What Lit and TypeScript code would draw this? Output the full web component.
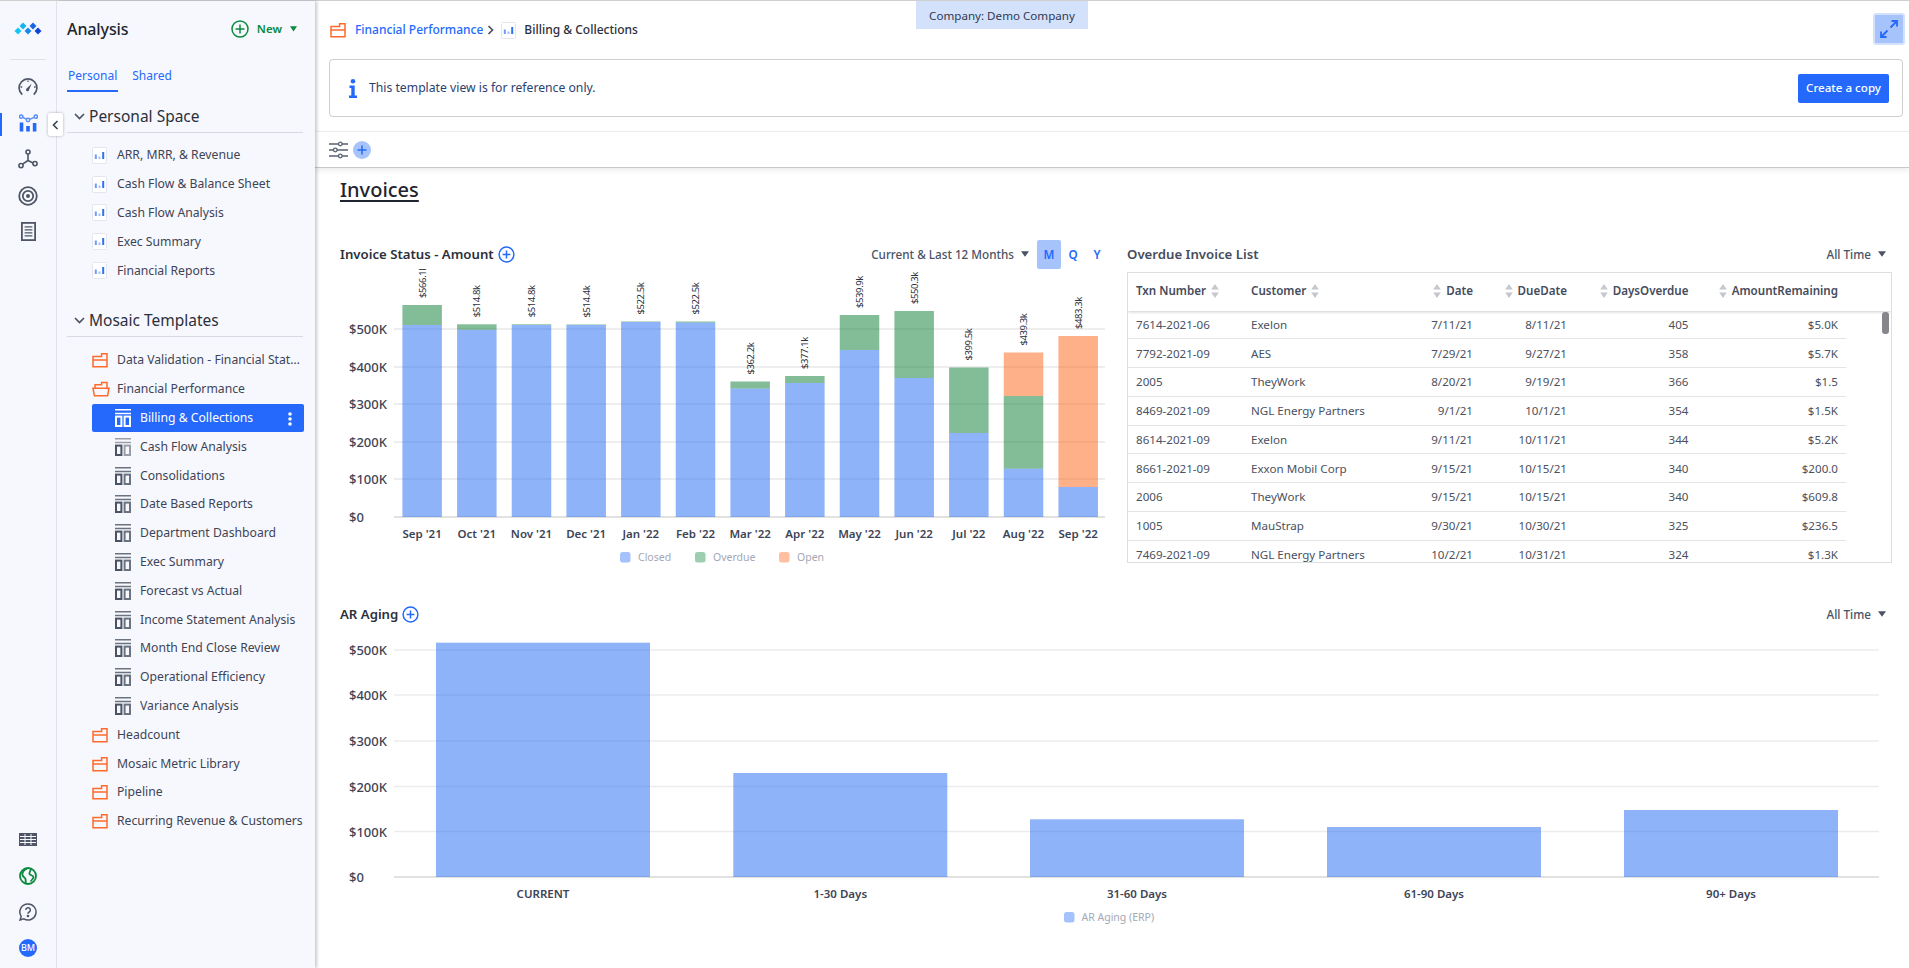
import { LitElement, html, css, svg } from "lit";
import { customElement } from "lit/decorators.js";

const personal = ["ARR, MRR, & Revenue", "Cash Flow & Balance Sheet", "Cash Flow Analysis", "Exec Summary", "Financial Reports"];
const reportsSub = ["Cash Flow Analysis", "Consolidations", "Date Based Reports", "Department Dashboard", "Exec Summary", "Forecast vs Actual", "Income Statement Analysis", "Month End Close Review", "Operational Efficiency", "Variance Analysis"];
const foldersAfter = ["Headcount", "Mosaic Metric Library", "Pipeline", "Recurring Revenue & Customers"];

const rows = [
  ["7614-2021-06", "Exelon", "7/11/21", "8/11/21", "405", "$5.0K"],
  ["7792-2021-09", "AES", "7/29/21", "9/27/21", "358", "$5.7K"],
  ["2005", "TheyWork", "8/20/21", "9/19/21", "366", "$1.5"],
  ["8469-2021-09", "NGL Energy Partners", "9/1/21", "10/1/21", "354", "$1.5K"],
  ["8614-2021-09", "Exelon", "9/11/21", "10/11/21", "344", "$5.2K"],
  ["8661-2021-09", "Exxon Mobil Corp", "9/15/21", "10/15/21", "340", "$200.0"],
  ["2006", "TheyWork", "9/15/21", "10/15/21", "340", "$609.8"],
  ["1005", "MauStrap", "9/30/21", "10/30/21", "325", "$236.5"],
  ["7469-2021-09", "NGL Energy Partners", "10/2/21", "10/31/21", "324", "$1.3K"],
];

const months = [
  { m: "Sep '21", t: "$566.1l", top: 305, closed: 325, over: 305 },
  { m: "Oct '21", t: "$514.8k", top: 324.3, closed: 329.7, over: 324.3 },
  { m: "Nov '21", t: "$514.8k", top: 324.3, closed: 325, over: 324.3 },
  { m: "Dec '21", t: "$514.4k", top: 324.5, closed: 325, over: 324.5 },
  { m: "Jan '22", t: "$522.5k", top: 321.5, closed: 322, over: 321.5 },
  { m: "Feb '22", t: "$522.5k", top: 321.5, closed: 322.5, over: 321.5 },
  { m: "Mar '22", t: "$362.2k", top: 381.5, closed: 388.5, over: 381.5 },
  { m: "Apr '22", t: "$377.1k", top: 376, closed: 383, over: 376 },
  { m: "May '22", t: "$539.9k", top: 315, closed: 350, over: 315 },
  { m: "Jun '22", t: "$550.3k", top: 311, closed: 378, over: 311 },
  { m: "Jul '22", t: "$399.5k", top: 367.5, closed: 433, over: 367.5 },
  { m: "Aug '22", t: "$439.3k", top: 352.5, closed: 468.7, over: 396 },
  { m: "Sep '22", t: "$483.3k", top: 336, closed: 487, over: 487 },
];
const aging = [
  { l: "CURRENT", x: 436, top: 642.7 },
  { l: "1-30 Days", x: 733.3, top: 773 },
  { l: "31-60 Days", x: 1030, top: 819.3 },
  { l: "61-90 Days", x: 1327, top: 827 },
  { l: "90+ Days", x: 1624, top: 810 },
];

const plusOutline = html`<svg class="plus" width="17" height="17" viewBox="0 0 17 17"><circle cx="8.5" cy="8.5" r="7.4" fill="none" stroke="#2469fb" stroke-width="1.5"/><path d="M8.5 4.6v7.8M4.6 8.5h7.8" stroke="#2469fb" stroke-width="1.5"/></svg>`;
const caret = html`<svg class="caret" width="8" height="6" viewBox="0 0 8 6"><path d="M0 .3h8L4 5.800z" fill="#4a5264"/></svg>`;
const sort = html`<svg class="sort" width="8" height="14" viewBox="0 0 8 14"><path d="M4 0l3.800 5.400H.2zM.2 8.600h7.600L4 14z" fill="#c5c8ce"/></svg>`;

const folder = html`<svg class="ico" width="16" height="16" viewBox="0 0 16 16"><path d="M1 14.700V4.400h8.600V1.800h5.400v12.900zM1 8h14" fill="none" stroke="#fd6a2a" stroke-width="1.500"/></svg>`;
const folderOpen = html`<svg class="ico" width="18" height="16" viewBox="0 0 18 16"><path d="M3 7V3.700h6.600V1.400h5.400V7M1 7.200h16l-1.400 7.600H2.400z" fill="none" stroke="#fd6a2a" stroke-width="1.500"/></svg>`;
const chartDoc = html`<svg class="ico" width="15" height="17" viewBox="0 0 15 17"><rect x=".5" y=".5" width="14" height="16" rx="1" fill="#fff" stroke="#e3e6ee"/><path d="M2.800 7.500h2v4.500h-2z" fill="#6f9cf6"/><path d="M6.500 9.500h2V12h-2z" fill="#a3c0f9"/><path d="M10.200 5h2v7h-2z" fill="#2f70f5"/></svg>`;
const layoutIcon = (c: string, c2: string) => html`<svg class="ico" width="16" height="18" viewBox="0 0 16 18"><path d="M0 .8h16M0 4.600h16" stroke="${c2}" stroke-width="1.500"/><rect x="1" y="7.600" width="5.400" height="9.400" fill="none" stroke="${c}" stroke-width="2"/><rect x="9.600" y="7.600" width="5.400" height="9.400" fill="none" stroke="${c2}" stroke-width="2"/></svg>`;

const railTop = [
  html`<svg width="20" height="18" viewBox="0 0 20 18" fill="none" stroke="#4d5566" stroke-width="1.700"><path d="M4.200 16.600A8.900 8.900 0 1 1 15.800 16.600"/><path d="M8.600 10.600l5-4.800-2.600 6.200a1.500 1.500 0 1 1-2.400-1.400z" fill="#4d5566" stroke="none"/><path d="M10 2.500v1.600M2.600 9h1.600M16 9h1.600" stroke-width="1.300"/></svg>`,
  html`<svg width="19" height="18" viewBox="0 0 19 18"><g fill="none" stroke="#5b8ff8" stroke-width="1.500"><circle cx="2.200" cy="2.600" r="1.700"/><circle cx="9" cy="6" r="1.700"/><circle cx="16.800" cy="2.600" r="1.700"/><path d="M3.800 3.400l3.600 1.800M10.600 5.400l4.600-2"/></g><path d="M.7 8.500h3.600v9H.7zM7.200 12h3.600v5.500H7.200zM13.800 9h3.600v8.500h-3.600z" fill="#2469fb"/></svg>`,
  html`<svg width="20" height="20" viewBox="0 0 20 20" fill="none" stroke="#4d5566" stroke-width="1.600"><circle cx="10" cy="3" r="2"/><circle cx="3" cy="16.600" r="2.100"/><circle cx="17" cy="14.600" r="2.100"/><path d="M10 5v6.500L4.600 15.200M10 11.500l5.100 2.500"/></svg>`,
  html`<svg width="20" height="20" viewBox="0 0 20 20" fill="none" stroke="#4d5566"><circle cx="10" cy="10" r="8.800" stroke-width="1.800"/><circle cx="10" cy="10" r="5.200" stroke-width="1.800"/><circle cx="10" cy="10" r="2" fill="#4d5566" stroke="none"/></svg>`,
  html`<svg width="15" height="19" viewBox="0 0 15 19" fill="none" stroke="#4d5566"><rect x=".9" y=".9" width="13.200" height="17.200" stroke-width="1.800"/><path d="M3.600 4.800h7.800M3.600 7.800h7.800M3.600 10.800h7.800M3.600 13.800h7.800" stroke-width="1.300"/></svg>`,
];

@customElement("app-root")
export class AppRoot extends LitElement {
  static styles = css`
    :host {
      display: block;
      width: 1909px;
      height: 968px;
      overflow: hidden;
      position: relative;
      font-family: "Noto Sans", "Open Sans", sans-serif;
      font-size: 12.2px;
      color: #3d4456;
      background: #fff;
    }
    * { box-sizing: border-box; }
    .shell { display: flex; height: 968px; border-top: 1px solid #cfcfcf; }
    .rail {
      width: 57px; flex: none; background: #f7f8fd; border-right: 1px solid #e3e5ec;
      display: flex; flex-direction: column; align-items: center; position: relative;
    }
    .logo { height: 58px; display: flex; align-items: center; justify-content: center; }
    .rail-sep { width: 36px; height: 1px; background: #e0e2e8; }
    .rail-items { display: flex; flex-direction: column; margin-top: 9px; }
    .rail-btn { width: 36px; height: 36.2px; display: flex; align-items: center; justify-content: center; }
    .rail-bottom { margin-top: auto; margin-bottom: 2px; display: flex; flex-direction: column; }
    .marker { position: absolute; left: 0; top: 112px; width: 2px; height: 23px; background: #2469fb; }
    .avatar {
      width: 18px; height: 18px; border-radius: 50%; background: #2469fb; color: #fff;
      font-size: 9px; font-weight: 500; display: flex; align-items: center; justify-content: center;
    }
    .collapse {
      position: absolute; left: 48px; top: 112px; width: 15px; height: 23px; background: #fff;
      border-radius: 2px; box-shadow: 0 0 3px rgba(0,0,0,.3); display: flex; align-items: center; justify-content: center; z-index: 3;
    }
    .side {
      width: 258px; flex: none; background: #f7f8fd; padding: 0 11px 0 10px;
      box-shadow: 2px 0 3px rgba(60,70,90,.28); position: relative; z-index: 2;
    }
    .side-title { height: 57px; padding-bottom: 2px; display: flex; align-items: center; justify-content: space-between; padding-right: 7px; }
    .side-title h1 { margin: 0; font-size: 16px; font-weight: 500; color: #22262f; letter-spacing: -.1px; }
    .new { display: flex; align-items: center; color: #0a8a3c; font-size: 11.5px; font-weight: 600; }
    .new svg:first-child { margin-right: 8px; }
    .new svg:last-child { margin-left: 8px; }
    .tabs { display: flex; gap: 13px; margin-top: 3px; height: 31px; }
    .tab { color: #2469fb; font-size: 12px; padding: 6px 1px 0; height: 31px; }
    .tab.on { border-bottom: 2px solid #2469fb; }
    .sec {
      height: 41px; display: flex; align-items: flex-end; padding: 0 0 5px 7px; border-bottom: 1px solid #d8dae3;
      font-size: 15.5px; line-height: 22px; color: #2b303c; margin-right: 1px;
    }
    .sec svg { margin: 0 4px 7px 0; }
    .sec.two { margin-top: 11px; }
    .list { display: flex; flex-direction: column; margin-top: 8px; }
    .list.two { margin-top: 9px; }
    .row { height: 28.8px; display: flex; align-items: center; padding-left: 25px; white-space: nowrap; color: #3d4456; position: relative; font-size: 12.2px; }
    .row .ic { width: 25px; flex: none; display: flex; align-items: center; }
    .row .lb { overflow: hidden; text-overflow: ellipsis; flex: 1; min-width: 0; padding-bottom: 1px; }
    .row.sub { padding-left: 48px; }
    .row.active { background: #2469fb; color: #fff; border-radius: 2px; margin-left: 25px; padding-left: 23px; }
    .row.active .dots { position: absolute; right: 12px; top: 8px; }
    .main { flex: 1; min-width: 0; display: flex; flex-direction: column; position: relative; }
    .crumb { height: 58px; display: flex; align-items: center; padding: 0 4px 0 15px; flex: none; }
    .crumb a { color: #2469fb; font-weight: 500; margin-left: 9px; font-size: 12px; padding-bottom: 2px; }
    .crumb .cur { color: #2b303c; font-weight: 500; margin-left: 8px; font-size: 12px; padding-bottom: 2px; }
    .crumb .sep { margin: 0 7px 0 4px; }
    .expand {
      margin-left: auto; margin-top: -2px; width: 32px; height: 32px; background: #a7c3fc; border: 2px solid #d3e1fd; border-radius: 3px;
      display: flex; align-items: center; justify-content: center;
    }
    .tag {
      position: absolute; left: 601px; top: 0; width: 172px; height: 28px; background: #d3e1fb; color: #2f3a52;
      display: flex; align-items: center; justify-content: center; font-size: 11.6px; z-index: 4;
    }
    .info {
      flex: none; margin: 0 6px 0 14px; height: 58px; border: 1px solid #cfcfcf; border-radius: 4px;
      display: flex; align-items: center; padding: 0 13px 0 19px; color: #2b4270; font-size: 12.2px;
    }
    .info svg { margin-right: 12px; }
    .info span { padding-bottom: 2px; }
    .btn {
      margin-left: auto; width: 91px; height: 29px; background: #2469fb; color: #fff; border-radius: 2px;
      display: flex; align-items: center; justify-content: center; font-size: 11.6px; font-weight: 500; padding-bottom: 1px;
    }
    .tools {
      flex: none; margin-top: 14px; height: 37px; border-top: 1px solid #ececec; border-bottom: 1px solid #c8c8c8;
      box-shadow: 0 3px 5px rgba(0,0,0,.07); display: flex; align-items: center; padding-left: 14px; gap: 5px;
    }
    .add { width: 18px; height: 18px; border-radius: 50%; background: #a7c3fc; display: flex; align-items: center; justify-content: center; }
    .content { flex: 1; padding: 8px 17px 0 25px; min-height: 0; }
    h2.page { margin: 0; font-size: 20px; line-height: 28px; font-weight: 500; color: #1f2430; text-decoration: underline; text-underline-offset: 3px; }
    .cols { display: flex; gap: 22px; margin-top: 36px; }
    .col { width: 765px; flex: none; }
    .head { height: 30px; padding-bottom: 2px; display: flex; align-items: center; font-size: 13.2px; font-weight: 600; color: #2b303c; }
    .head.dim { color: #454c5c; }
    .head .plus { margin-left: 4px; }
    .right { margin-left: auto; display: flex; align-items: center; padding-right: 6px; font-size: 11.7px; font-weight: 500; color: #4a5264; }
    .right .caret { margin-left: 7px; }
    .right.bare { padding-right: 0; margin-right: -4px; }
    .seg { width: 24px; height: 29px; display: flex; align-items: center; justify-content: center; color: #2469fb; font-weight: 600; border-radius: 2px; }
    .seg.on { background: #a7c3fc; margin-left: 8px; }
    .chart { display: block; overflow: visible; }
    .chart text { font-family: "Noto Sans", sans-serif; }
    .t-y { font-size: 13px; font-weight: 500; fill: #3d4456; }
    .t-x { font-size: 11.5px; font-weight: 600; fill: #3d4456; text-anchor: middle; }
    .t-v { font-size: 9.500px; letter-spacing: -.4px; fill: #2b303c; }
    .t-l { font-size: 10.500px; fill: #a3a8b4; }
    .tbl { margin-top: 2px; height: 291px; border: 1px solid #dedede; overflow: hidden; position: relative; }
    .tr { display: grid; grid-template-columns: 115px 150px 88px 94px 121.5px 149.5px; width: 718px; }
    .th { height: 37.5px; padding-bottom: 2px; font-weight: 600; font-size: 11.6px; color: #454c5c; box-shadow: 0 1px 3px rgba(0,0,0,.2); width: 100%; }
    .th > div { display: flex; align-items: center; gap: 5px; padding: 0 8px; }
    .td { height: 28.75px; border-bottom: 1px solid #e4e4e4; color: #4a5160; font-size: 11.6px; }
    .td > div { display: flex; align-items: center; padding: 0 8px; white-space: nowrap; }
    .num { justify-content: flex-end; }
    .thumb { position: absolute; right: 2px; top: 39px; width: 7px; height: 22px; background: #85878c; border-radius: 3px; }
    .wide { margin-top: 20px; }
  `;

  private barChart() {
    const step = 54.67, w = 39.5, x0 = 402.4;
    const ys: [string, number][] = [["$500K", 329], ["$400K", 367], ["$300K", 404], ["$200K", 442], ["$100K", 479], ["$0", 517]];
    return html`<svg class="chart" width="770" height="310" viewBox="340 270 770 310">
      ${ys.map(([l, y]) => svg`
        <line x1="394" x2="1105" y1=${y} y2=${y} stroke=${l === "$0" ? "#c4c4c4" : "#e9e9e9"} stroke-width=${l === "$0" ? 1 : 1.5}></line>
        <text class="t-y" x="349" y=${y + 5}>${l}</text>`)}
      ${months.map((d, i) => {
        const x = x0 + i * step, c = x + w / 2;
        return svg`
          <rect x=${x} y=${d.closed} width=${w} height=${517 - d.closed} fill="#1f67f1" fill-opacity=".5"></rect>
          ${d.closed > d.over ? svg`<rect x=${x} y=${d.over} width=${w} height=${d.closed - d.over} fill="#057b30" fill-opacity=".5"></rect>` : ""}
          ${d.over > d.top ? svg`<rect x=${x} y=${d.top} width=${w} height=${d.over - d.top} fill="#fd6212" fill-opacity=".5"></rect>` : ""}
          <text class="t-v" transform="translate(${c + 3.5} ${d.top - 7}) rotate(-90)">${d.t}</text>
          <text class="t-x" x=${c} y="538">${d.m}</text>`;
      })}
      <rect x="620" y="552" width="10.5" height="10.5" rx="2.5" fill="#a5c2fc"></rect><text class="t-l" x="638" y="561">Closed</text>
      <rect x="695" y="552" width="10.5" height="10.5" rx="2.5" fill="#9ccfb0"></rect><text class="t-l" x="713" y="561">Overdue</text>
      <rect x="779" y="552" width="10.5" height="10.5" rx="2.5" fill="#fec0a0"></rect><text class="t-l" x="797" y="561">Open</text>
    </svg>`;
  }

  private agingChart() {
    const ys: [string, number][] = [["$500K", 650], ["$400K", 695], ["$300K", 741], ["$200K", 786.5], ["$100K", 831.5], ["$0", 877]];
    return html`<svg class="chart" width="1545" height="300" viewBox="340 630 1545 300">
      ${ys.map(([l, y]) => svg`
        <line x1="394" x2="1879" y1=${y} y2=${y} stroke=${l === "$0" ? "#c4c4c4" : "#ececec"} stroke-width=${l === "$0" ? 1 : 1.5}></line>
        <text class="t-y" x="349" y=${y + 5}>${l}</text>`)}
      ${aging.map((d) => svg`
        <rect x=${d.x} y=${d.top} width="214" height=${877 - d.top} fill="#1f67f1" fill-opacity=".5"></rect>
        <text class="t-x" x=${d.x + 107} y="898">${d.l}</text>`)}
      <rect x="1064" y="912" width="10.5" height="10.5" rx="2.5" fill="#a5c2fc"></rect><text class="t-l" x="1081.5" y="921">AR Aging (ERP)</text>
    </svg>`;
  }

  private rail() {
    return html`<nav class="rail">
      <div class="logo"><svg width="28" height="16" viewBox="0 0 28 16">
        <path d="M4 5.500L7.500 9 4 12.500.5 9z" fill="#14c6f7"/><path d="M9 .5L12.500 4 9 7.500 5.500 4z" fill="#14b4f4"/>
        <path d="M14 5.500L17.500 9 14 12.500 10.500 9z" fill="#1a86ee"/><path d="M19 .5L22.500 4 19 7.500 15.500 4z" fill="#1668e4"/>
        <path d="M24 5.500L27.500 9 24 12.500 20.500 9z" fill="#0f45d2"/></svg></div>
      <div class="rail-sep"></div>
      <div class="rail-items">${railTop.map((i) => html`<div class="rail-btn">${i}</div>`)}</div>
      <div class="rail-bottom">
        <div class="rail-btn"><svg width="18" height="13" viewBox="0 0 18 13"><rect width="18" height="13" fill="#4d5566"/><path d="M1 3.500h16M1 6.500h16M1 9.500h16M6 1v11M12 1v11" stroke="#f7f8fd" stroke-width="1"/></svg></div>
        <div class="rail-btn"><svg width="18" height="18" viewBox="0 0 18 18" fill="none" stroke="#0a8a3c" stroke-width="1.800"><circle cx="9" cy="9" r="8"/><path d="M8 1.500C5 3 3 5 3.500 8c.4 2 2.500 2.500 3 4 .3 1.300 0 3 .5 4.500M12 2c-.5 2-2 3.500-1.500 5s3.500 1 4 3c.3 1.500-2 3-3 4.500"/></svg></div>
        <div class="rail-btn"><svg width="18" height="18" viewBox="0 0 18 18" fill="none" stroke="#4d5566" stroke-width="1.500"><path d="M9 1a8 8 0 1 1-4.200 14.800L1 17l1.200-3.600A8 8 0 0 1 9 1z"/><path d="M6.800 7a2.300 2.300 0 1 1 3.400 2c-.8.500-1.200.9-1.200 1.800"/><circle cx="9" cy="13" r=".6" fill="#4d5566"/></svg></div>
        <div class="rail-btn"><div class="avatar">BM</div></div>
      </div>
      <div class="marker"></div>
      <div class="collapse"><svg width="7" height="10" viewBox="0 0 7 10"><path d="M5.500 1L1.500 5l4 4" fill="none" stroke="#3d4456" stroke-width="1.700"/></svg></div>
    </nav>`;
  }

  private side() {
    const chev = html`<svg width="11" height="7" viewBox="0 0 11 7"><path d="M1 1l4.500 4.500L10 1" fill="none" stroke="#4a5264" stroke-width="1.700"/></svg>`;
    const r = (icon: unknown, label: string, cls = "") => html`<div class="row ${cls}"><span class="ic">${icon}</span><span class="lb">${label}</span></div>`;
    return html`<aside class="side">
      <div class="side-title"><h1>Analysis</h1>
        <div class="new">
          <svg width="18" height="18" viewBox="0 0 18 18"><circle cx="9" cy="9" r="8" fill="none" stroke="#0a8a3c" stroke-width="1.500"/><path d="M9 4.500v9M4.500 9h9" stroke="#0a8a3c" stroke-width="1.500"/></svg>
          New
          <svg width="7" height="6" viewBox="0 0 7 6"><path d="M0 .3h7L3.500 5.500z" fill="#0a8a3c"/></svg>
        </div>
      </div>
      <div class="tabs"><div class="tab on">Personal</div><div class="tab">Shared</div></div>
      <div class="sec">${chev}Personal Space</div>
      <div class="list">${personal.map((p) => r(chartDoc, p))}</div>
      <div class="sec two">${chev}Mosaic Templates</div>
      <div class="list two">
        ${r(folder, "Data Validation - Financial Statements")}
        <div class="row"><span class="ic">${folderOpen}</span><span class="lb">Financial Performance</span></div>
        <div class="row active"><span class="ic">${layoutIcon("#fff", "#fff")}</span><span class="lb">Billing & Collections</span>
          <svg class="dots" width="4" height="14" viewBox="0 0 4 14" fill="#fff"><circle cx="2" cy="2" r="1.800"/><circle cx="2" cy="7" r="1.800"/><circle cx="2" cy="12" r="1.800"/></svg></div>
        ${reportsSub.map((s, i) => r(layoutIcon("#4a5264", i === 0 ? "#9a9ea8" : "#6b7280"), s, "sub"))}
        ${foldersAfter.map((f) => r(folder, f))}
      </div>
    </aside>`;
  }

  private table() {
    return html`<div class="tbl">
      <div class="tr th">
        <div>Txn Number ${sort}</div>
        <div>Customer ${sort}</div>
        <div class="num">${sort} Date</div>
        <div class="num">${sort} DueDate</div>
        <div class="num">${sort} DaysOverdue</div>
        <div class="num">${sort} AmountRemaining</div>
      </div>
      ${rows.map((c) => html`<div class="tr td">
        <div>${c[0]}</div><div>${c[1]}</div>
        <div class="num">${c[2]}</div><div class="num">${c[3]}</div><div class="num">${c[4]}</div><div class="num">${c[5]}</div>
      </div>`)}
      <div class="thumb"></div>
    </div>`;
  }

  render() {
    return html`<div class="shell">
      ${this.rail()}
      ${this.side()}
      <main class="main">
        <div class="tag">Company: Demo Company</div>
        <div class="crumb">
          ${folder}
          <a>Financial Performance</a>
          <svg class="sep" width="7" height="10" viewBox="0 0 7 10"><path d="M1.500 1l4 4-4 4" fill="none" stroke="#4a5264" stroke-width="1.700"/></svg>
          ${chartDoc}
          <span class="cur">Billing & Collections</span>
          <div class="expand"><svg width="20" height="20" viewBox="0 0 20 20" fill="none" stroke="#2469fb" stroke-width="1.800"><path d="M11.500 8.500L18 2M12.500 2H18v5.500M8.500 11.500L2 18M2 12.500V18h5.500"/></svg></div>
        </div>
        <div class="info">
          <svg width="8" height="19" viewBox="0 0 8 19" fill="#2469fb"><circle cx="4" cy="2.300" r="2.300"/><path d="M.5 6.500h5.200v10H8V19H0v-2.500h2.300V9H.5z"/></svg>
          <span>This template view is for reference only.</span>
          <div class="btn">Create a copy</div>
        </div>
        <div class="tools">
          <svg width="19" height="18" viewBox="0 0 19 18" fill="none" stroke="#5a6170" stroke-width="1.300"><path d="M0 3h9.500M13 3h6M0 9h4.500M8 9h11M0 15h9.500M13 15h6"/><circle cx="11.300" cy="3" r="1.800"/><circle cx="6.300" cy="9" r="1.800"/><circle cx="11.300" cy="15" r="1.800"/></svg>
          <div class="add"><svg width="10" height="10" viewBox="0 0 10 10"><path d="M5 .5v9M.5 5h9" stroke="#2469fb" stroke-width="1.500"/></svg></div>
        </div>
        <div class="content">
          <h2 class="page">Invoices</h2>
          <div class="cols">
            <section class="col">
              <div class="head">Invoice Status - Amount ${plusOutline}
                <div class="right bare">Current & Last 12 Months ${caret}
                  <div class="seg on">M</div><div class="seg">Q</div><div class="seg">Y</div></div>
              </div>
              ${this.barChart()}
            </section>
            <section class="col">
              <div class="head dim">Overdue Invoice List <div class="right">All Time ${caret}</div></div>
              ${this.table()}
            </section>
          </div>
          <section class="wide">
            <div class="head">AR Aging ${plusOutline}<div class="right">All Time ${caret}</div></div>
            ${this.agingChart()}
          </section>
        </div>
      </main>
    </div>`;
  }
}
